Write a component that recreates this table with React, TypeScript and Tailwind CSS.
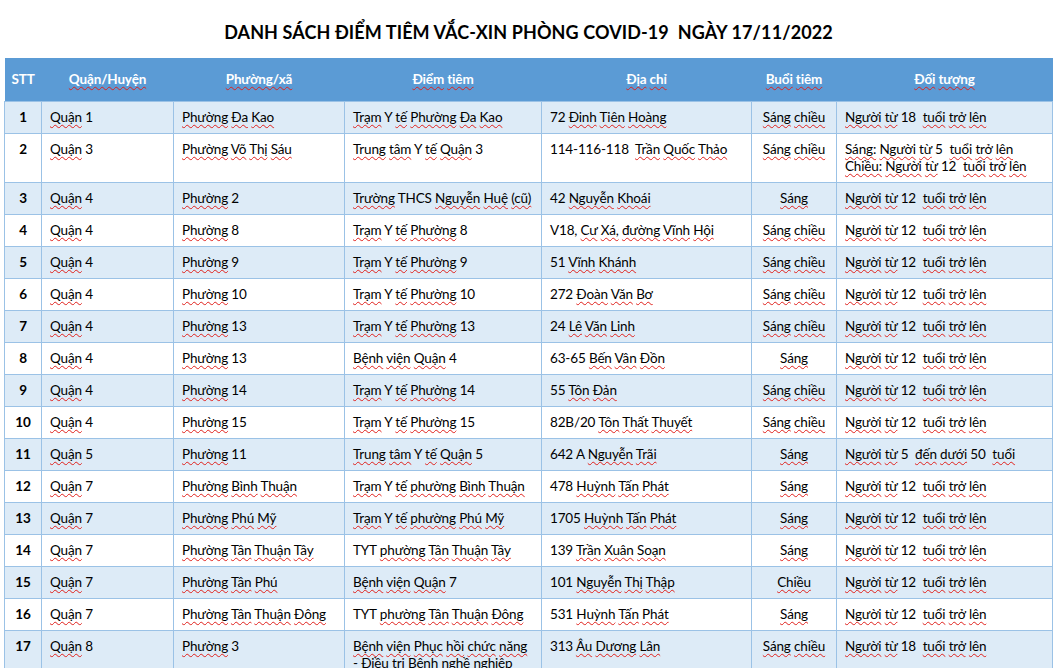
import React from "react";

type Row = {
  stt: number;
  quan: string;
  phuong: string;
  diem: string[];
  diaChi: string;
  buoi: string;
  doiTuong: string[];
};

const rows: Row[] = [
  { stt: 1, quan: "Quận 1", phuong: "Phường Đa Kao", diem: ["Trạm Y tế Phường Đa Kao"], diaChi: "72 Đinh Tiên Hoàng", buoi: "Sáng chiều", doiTuong: ["Người từ 18  tuổi trở lên"] },
  { stt: 2, quan: "Quận 3", phuong: "Phường Võ Thị Sáu", diem: ["Trung tâm Y tế Quận 3"], diaChi: "114-116-118  Trần Quốc Thảo", buoi: "Sáng chiều", doiTuong: ["Sáng: Người từ 5  tuổi trở lên", "Chiều: Người từ 12  tuổi trở lên"] },
  { stt: 3, quan: "Quận 4", phuong: "Phường 2", diem: ["Trường THCS Nguyễn Huệ (cũ)"], diaChi: "42 Nguyễn Khoái", buoi: "Sáng", doiTuong: ["Người từ 12  tuổi trở lên"] },
  { stt: 4, quan: "Quận 4", phuong: "Phường 8", diem: ["Trạm Y tế Phường 8"], diaChi: "V18, Cư Xá, đường Vĩnh Hội", buoi: "Sáng chiều", doiTuong: ["Người từ 12  tuổi trở lên"] },
  { stt: 5, quan: "Quận 4", phuong: "Phường 9", diem: ["Trạm Y tế Phường 9"], diaChi: "51 Vĩnh Khánh", buoi: "Sáng chiều", doiTuong: ["Người từ 12  tuổi trở lên"] },
  { stt: 6, quan: "Quận 4", phuong: "Phường 10", diem: ["Trạm Y tế Phường 10"], diaChi: "272 Đoàn Văn Bơ", buoi: "Sáng chiều", doiTuong: ["Người từ 12  tuổi trở lên"] },
  { stt: 7, quan: "Quận 4", phuong: "Phường 13", diem: ["Trạm Y tế Phường 13"], diaChi: "24 Lê Văn Linh", buoi: "Sáng chiều", doiTuong: ["Người từ 12  tuổi trở lên"] },
  { stt: 8, quan: "Quận 4", phuong: "Phường 13", diem: ["Bệnh viện Quận 4"], diaChi: "63-65 Bến Vân Đồn", buoi: "Sáng", doiTuong: ["Người từ 12  tuổi trở lên"] },
  { stt: 9, quan: "Quận 4", phuong: "Phường 14", diem: ["Trạm Y tế Phường 14"], diaChi: "55 Tôn Đản", buoi: "Sáng chiều", doiTuong: ["Người từ 12  tuổi trở lên"] },
  { stt: 10, quan: "Quận 4", phuong: "Phường 15", diem: ["Trạm Y tế Phường 15"], diaChi: "82B/20 Tôn Thất Thuyết", buoi: "Sáng chiều", doiTuong: ["Người từ 12  tuổi trở lên"] },
  { stt: 11, quan: "Quận 5", phuong: "Phường 11", diem: ["Trung tâm Y tế Quận 5"], diaChi: "642 A Nguyễn Trãi", buoi: "Sáng", doiTuong: ["Người từ 5  đến dưới 50  tuổi"] },
  { stt: 12, quan: "Quận 7", phuong: "Phường Bình Thuận", diem: ["Trạm Y tế phường Bình Thuận"], diaChi: "478 Huỳnh Tấn Phát", buoi: "Sáng", doiTuong: ["Người từ 12  tuổi trở lên"] },
  { stt: 13, quan: "Quận 7", phuong: "Phường Phú Mỹ", diem: ["Trạm Y tế phường Phú Mỹ"], diaChi: "1705 Huỳnh Tấn Phát", buoi: "Sáng", doiTuong: ["Người từ 12  tuổi trở lên"] },
  { stt: 14, quan: "Quận 7", phuong: "Phường Tân Thuận Tây", diem: ["TYT phường Tân Thuận Tây"], diaChi: "139 Trần Xuân Soạn", buoi: "Sáng", doiTuong: ["Người từ 12  tuổi trở lên"] },
  { stt: 15, quan: "Quận 7", phuong: "Phường Tân Phú", diem: ["Bệnh viện Quận 7"], diaChi: "101 Nguyễn Thị Thập", buoi: "Chiều", doiTuong: ["Người từ 12  tuổi trở lên"] },
  { stt: 16, quan: "Quận 7", phuong: "Phường Tân Thuận Đông", diem: ["TYT phường Tân Thuận Đông"], diaChi: "531 Huỳnh Tấn Phát", buoi: "Sáng", doiTuong: ["Người từ 12  tuổi trở lên"] },
  { stt: 17, quan: "Quận 8", phuong: "Phường 3", diem: ["Bệnh viện Phục hồi chức năng", "- Điều trị Bệnh nghề nghiệp"], diaChi: "313 Âu Dương Lân", buoi: "Sáng chiều", doiTuong: ["Người từ 18  tuổi trở lên"] },
];

// spell-check squiggle under words that have lowercase letters
function Squiggly({ text }: { text: string }) {
  const parts = text.split(/(\s+)/);
  return (
    <>
      {parts.map((p, i) =>
        /[a-zà-ỹđ]/.test(p) ? (
          <span key={i} className="underline decoration-wavy decoration-[#e0201b] decoration-1 underline-offset-[2px] [text-decoration-skip-ink:none]">
            {p}
          </span>
        ) : (
          <span key={i} className="whitespace-pre">{p}</span>
        )
      )}
    </>
  );
}

const headers = ["STT", "Quận/Huyện", "Phường/xã", "Điểm tiêm", "Địa chỉ", "Buổi tiêm", "Đối tượng"];

const cell = "border border-[#9bc2e6] pt-[7px] pb-[7px] align-top whitespace-nowrap overflow-hidden";

export default function App() {
  return (
    <div className="w-[1057px] bg-white text-black" style={{ fontFamily: "Lato, 'Noto Sans', sans-serif" }}>
      <h1 className="h-[58px] pt-[19px] text-center text-[18px] font-bold leading-[26px] tracking-[0.1px]">
        DANH SÁCH ĐIỂM TIÊM VẮC-XIN PHÒNG COVID-19&nbsp; NGÀY 17/11/2022
      </h1>
      <table className="ml-[4px] w-[1048px] table-fixed border-collapse text-[13.5px] leading-[17px] tracking-[-0.15px]">
        <colgroup>
          <col className="w-[37px]" />
          <col className="w-[132px]" />
          <col className="w-[171px]" />
          <col className="w-[197px]" />
          <col className="w-[210px]" />
          <col className="w-[85px]" />
          <col className="w-[216px]" />
        </colgroup>
        <thead>
          <tr className="h-[43px] bg-[#5b9bd5] text-white">
            {headers.map((h) => (
              <th key={h} className="px-1 text-center align-middle font-bold">
                <Squiggly text={h} />
              </th>
            ))}
          </tr>
        </thead>
        <tbody>
          {rows.map((r) => (
            <tr key={r.stt} className={r.stt % 2 === 1 ? "bg-[#ddebf7]" : "bg-white"}>
              <td className={`${cell} text-center font-bold`}>{r.stt}</td>
              <td className={`${cell} px-2`}><Squiggly text={r.quan} /></td>
              <td className={`${cell} px-2`}><Squiggly text={r.phuong} /></td>
              <td className={`${cell} px-2`}>
                {r.diem.map((d) => (
                  <div key={d}><Squiggly text={d} /></div>
                ))}
              </td>
              <td className={`${cell} px-2`}><Squiggly text={r.diaChi} /></td>
              <td className={`${cell} px-1 text-center`}><Squiggly text={r.buoi} /></td>
              <td className={`${cell} px-2`}>
                {r.doiTuong.map((d) => (
                  <div key={d}><Squiggly text={d} /></div>
                ))}
              </td>
            </tr>
          ))}
        </tbody>
      </table>
    </div>
  );
}
